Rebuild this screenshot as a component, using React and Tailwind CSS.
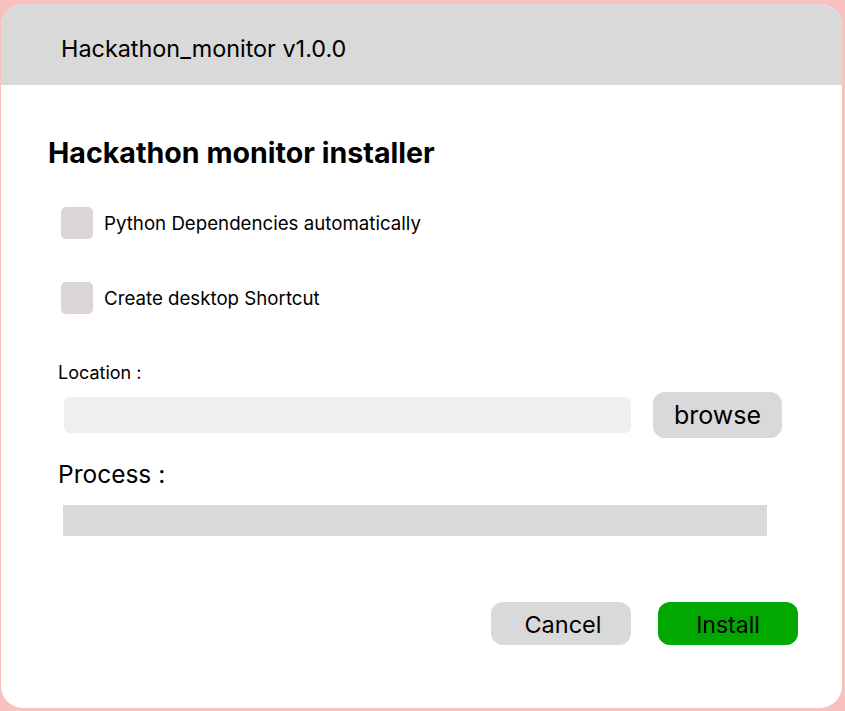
export default function App() {
  return (
    <div className="w-[845px] h-[711px] bg-[#f9c0c0] pt-[4px] pl-[1px] pr-[3px] pb-[3px]" style={{ fontFamily: "Inter, 'Noto Sans', sans-serif" }}>
      <div className="h-[704px] w-[841px] bg-white rounded-[22px] overflow-hidden flex flex-col">
        <div className="h-[81px] bg-[#d9d9d9] flex items-start pt-[31px] pl-[60px] shrink-0">
          <span className="text-[23.4px] leading-[28px] text-black">Hackathon_monitor v1.0.0</span>
        </div>
        <div className="flex flex-col">
          <h1 className="mt-[51px] ml-[47px] text-[28.6px] font-bold text-black leading-[34px]">Hackathon monitor installer</h1>
          <div className="mt-[37px] ml-[60px] flex items-center gap-[11px]">
            <div className="w-[32px] h-[32px] rounded-[5px] bg-[#dcd5d5]"></div>
            <span className="text-[18.7px] leading-[30px] pt-[2px] text-black">Python Dependencies automatically</span>
          </div>
          <div className="mt-[43px] ml-[60px] flex items-center gap-[11px]">
            <div className="w-[32px] h-[32px] rounded-[5px] bg-[#dcd5d5]"></div>
            <span className="text-[18.7px] leading-[30px] pt-[2px] text-black">Create desktop Shortcut</span>
          </div>
          <div className="mt-[47px] ml-[57px] text-[18px] leading-[24px] text-black">Location :</div>
          <div className="mt-[7px] flex items-center">
            <div className="ml-[63px] w-[567px] h-[36px] bg-[#efefef] rounded-[6px]"></div>
            <div className="ml-[22px] w-[129px] h-[46px] bg-[#d9d9d9] rounded-[12px] flex items-center justify-center pt-[2px] text-[25px] text-black">browse</div>
          </div>
          <div className="mt-[21px] ml-[57px] text-[24.5px] leading-[30px] text-black">Process :</div>
          <div className="mt-[16px] ml-[62px] w-[704px] h-[31px] bg-[#d9d9d9]"></div>
          <div className="mt-[66px] flex">
            <div className="ml-[490px] w-[140px] h-[43px] bg-[#d9d9d9] rounded-[12px] flex items-center justify-center pt-[3px] pl-[4px] text-[23.5px] text-black">Cancel</div>
            <div className="ml-[27px] w-[140px] h-[43px] bg-[#00a800] rounded-[12px] flex items-center justify-center pt-[3px] text-[23px] text-black">Install</div>
          </div>
        </div>
      </div>
    </div>
  );
}
